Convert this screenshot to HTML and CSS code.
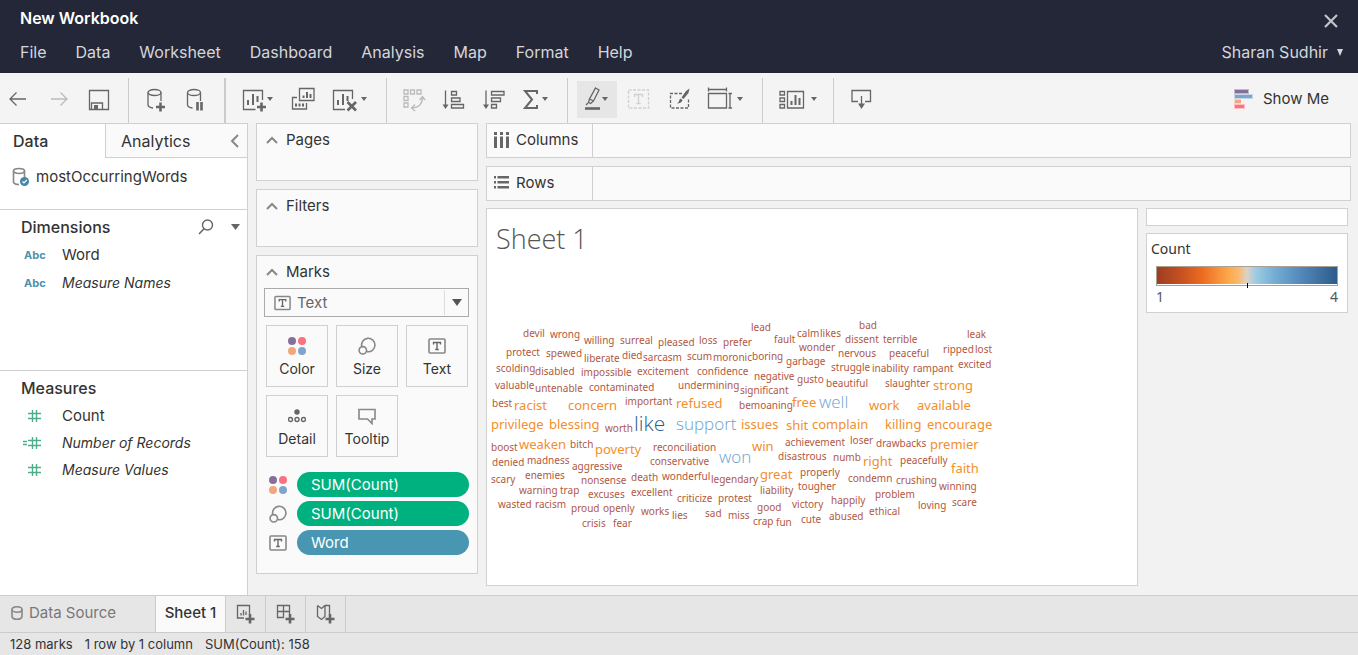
FILE: index.html
```html
<!DOCTYPE html>
<html lang="en">
<head>
<meta charset="utf-8">
<title>New Workbook</title>
<link rel="stylesheet" href="styles.css">
</head>
<body>
<svg class="defs" aria-hidden="true">
  <symbol id="i-text" viewBox="0 0 18 18"><rect x="1" y="2" width="16" height="14" rx="1" class="ln"/><path class="ln2" d="M5.500 7.500V5.500H12.500V7.500M9 5.500V12.500M7.200 12.500H10.800"/></symbol>
  <symbol id="i-color" viewBox="0 0 18 18"><circle cx="4" cy="4" r="4" fill="#86709b"/><circle cx="14" cy="4" r="4" fill="#fa7180"/><circle cx="4" cy="14" r="4" fill="#f3a67c"/><circle cx="14" cy="14" r="4" fill="#80a5cd"/></symbol>
  <symbol id="i-size" viewBox="0 0 18 18"><path class="ln" d="M3.800 9.800A6.700 6.700 0 1 1 9 14.600"/><circle cx="4.800" cy="13.300" r="3.700" class="ln"/></symbol>
  <symbol id="i-up" viewBox="0 0 12 8"><path d="M1 7 6 2 11 7" fill="none" stroke="#888" stroke-width="2"/></symbol>
  <symbol id="i-hash" viewBox="0 0 20 14"><path d="M9.500 1V13M13.500 1V13M5 4.500H18M5 9.500H18" fill="none" stroke="#4fae8a" stroke-width="1.400"/></symbol>
</svg>

<header class="top">
  <div class="top-row">
    <h1 class="book">New Workbook</h1>
    <button class="close" aria-label="Close"><svg width="14" height="14" viewBox="0 0 14 14"><path d="M1 1 13 13M13 1 1 13" stroke="#c4c5ca" stroke-width="2.200"/></svg></button>
  </div>
  <div class="top-row">
    <nav class="menu">
      <a href="#file">File</a><a href="#data">Data</a><a href="#worksheet">Worksheet</a><a href="#dashboard">Dashboard</a><a href="#analysis">Analysis</a><a href="#map">Map</a><a href="#format">Format</a><a href="#help">Help</a>
    </nav>
    <button class="user">Sharan Sudhir <svg width="6" height="7" viewBox="0 0 6 7"><path d="M0 0H6L3 7Z" fill="#d5d6da"/></svg></button>
  </div>
</header>

<div class="toolbar">
  <div class="group g1">
    <button class="tool" aria-label="Undo"><svg viewBox="0 0 32 32"><path class="t" d="M14.500 9.500 8 16 14.500 22.500M8 16H24"/></svg></button>
    <button class="tool" aria-label="Redo" disabled><svg viewBox="0 0 32 32"><path class="t off" d="M18.500 9.500 25 16 18.500 22.500M25 16H9"/></svg></button>
    <button class="tool" aria-label="Save"><svg viewBox="0 0 32 32"><path class="t" d="M7.500 7.500H26.500V26.500H7.500ZM9.500 26.500V20H20.500V26.500"/><path class="f" d="M12 22H16V26H12Z"/></svg></button>
  </div>
  <div class="group g2">
    <button class="tool" aria-label="New data source"><svg viewBox="0 0 32 32"><ellipse class="t" cx="14.500" cy="9.500" rx="6.500" ry="3"/><path class="t" d="M8 9.500V22Q8.500 24.500 13 25M21 9.500V18"/><path class="t b" d="M20.500 19.500V28.500M16 24H25"/></svg></button>
    <button class="tool" aria-label="Pause updates"><svg viewBox="0 0 32 32"><ellipse class="t" cx="14" cy="9.500" rx="6.500" ry="3"/><path class="t" d="M7.500 9.500V22Q8 24.500 12.500 25M20.500 9.500V18"/><path class="t b" d="M17.500 19V27.500M21.500 19V27.500"/></svg></button>
  </div>
  <div class="group g3">
    <button class="tool wide" aria-label="New worksheet"><svg viewBox="0 0 40 32"><path class="t" d="M22.500 17V7.500H3.500V26.500H15.500"/><path class="t m" d="M8 17V22M13 11V22M17.500 13V19"/><path class="t b" d="M21.500 19.500V28.500M17 24H26"/><path class="f" d="M27 14H33L30 18Z"/></svg></button>
    <button class="tool" aria-label="Duplicate"><svg viewBox="0 0 32 32"><path class="t" d="M11.500 5.500H26V17.500H11.500ZM9 14.500H4.500V26H18.500V20"/><path class="t m" d="M15.500 12.500V15M19 9V15M22.500 11V15M8 20.500V23.500M11.500 20.500V23.500M15 20.500V23.500"/></svg></button>
    <button class="tool wide" aria-label="Clear sheet"><svg viewBox="0 0 40 32"><path class="t" d="M24.500 16V7.500H5.500V26.500H17"/><path class="t m" d="M10 17V22M15 11V22M19.500 13V18"/><path class="t b" d="M19.500 19 28 27.500M28 19 19.500 27.500"/><path class="f" d="M33 14H39L36 18Z"/></svg></button>
  </div>
  <div class="group g4">
    <button class="tool" aria-label="Swap rows and columns" disabled><svg viewBox="0 0 32 32"><path class="t off" d="M6 7H10V11H6ZM12.500 7H16.500V11H12.500ZM19 7H23V11H19ZM6 13.500H10V17.500H6ZM6 20H10V24H6ZM24.500 14Q24.500 24.500 14 25M21.500 17 24.500 13.500 27 17M17 21.500 13.500 25 17 28"/></svg></button>
    <button class="tool" aria-label="Sort ascending"><svg viewBox="0 0 32 32"><path class="t" d="M7.500 7.500V23M13.500 8.500H18.500V12H13.500ZM13.500 15H22V18.500H13.500ZM13.500 21.500H25.500V25H13.500Z"/><path class="f" d="M4.500 21.500H10.500L7.500 26Z"/></svg></button>
    <button class="tool" aria-label="Sort descending"><svg viewBox="0 0 32 32"><path class="t" d="M8 7.500V23M13.500 8.500H26V12H13.500ZM13.500 15H22.500V18.500H13.500ZM13.500 21.500H18.500V25H13.500Z"/><path class="f" d="M5 21.500H11L8 26Z"/></svg></button>
    <button class="tool wide" aria-label="Totals"><svg viewBox="0 0 40 32"><path class="t m" d="M19 11V8H7L14 16.500 7 25H19V22"/><path class="f" d="M24 14H30L27 18Z"/></svg></button>
  </div>
  <div class="group g5">
    <button class="tool wide active" aria-label="Highlight"><svg viewBox="0 0 40 32"><path class="t" d="M18.500 5 22 7 16.500 18 12.500 16ZM12.500 16 11.500 19.500 13.500 20.500 16.500 18M9 22 11 20"/><path class="t b" d="M8 25.500H23"/><path class="f" d="M25 14H31L28 18Z"/></svg></button>
    <button class="tool" aria-label="Show mark labels" disabled><svg viewBox="0 0 32 32"><path class="t faint" stroke-dasharray="3 1.500" d="M3.500 7H23.500V25H3.500Z"/><path class="t faint" d="M9.500 14V11.500H17.500V14M13.500 11.500V20.500M11.500 20.500H15.500"/></svg></button>
    <button class="tool" aria-label="Format"><svg viewBox="0 0 32 32"><path class="t" stroke-dasharray="3 1.500" d="M17 10.500H5.500V25H23.500V15"/><path class="f" d="M24.500 5.500 23.500 10 18.500 16 16.500 14.500 21 8ZM16 15.500 17.500 17.500Q16 20.500 12 20.500 14.500 18.500 14.500 16.500Z"/></svg></button>
    <button class="tool wide" aria-label="Fit"><svg viewBox="0 0 40 32"><path class="t" d="M3.500 10.500H21.500V25H3.500ZM3.500 6.500H21.500M3.500 4.500V8.500M21.500 4.500V8.500M25 10.500V25M23.500 10.500H27M23.500 25H27"/><path class="f" d="M32 14H38L35 18Z"/></svg></button>
  </div>
  <div class="group g6">
    <button class="tool wide" aria-label="Show or hide cards"><svg viewBox="0 0 40 32"><path class="t" d="M1 8.500H5.500V12H1ZM1 15H5.500V18.500H1ZM1 21.500H5.500V25H1ZM8.500 8.500H24.500V25H8.500Z"/><path class="t m" d="M12.500 18V22M16.500 12V22M20.500 15V22"/><path class="f" d="M32 14H38L35 18Z"/></svg></button>
  </div>
  <div class="group g7">
    <button class="tool" aria-label="Presentation mode"><svg viewBox="0 0 32 32"><path class="t" d="M13 18.500H7V7.500H25.500V18.500H20M16.500 13V22"/><path class="f" d="M13 20.500H20L16.500 26Z"/></svg></button>
  </div>
  <button class="showme"><svg width="19" height="20" viewBox="0 0 19 20"><path d="M0 0H15V5H0Z" fill="#c4b9cd"/><path d="M1 1H14V4H1Z" fill="#86709b"/><path d="M0 5H19V10H0Z" fill="#c5d7e8"/><path d="M1 6H18V9H1Z" fill="#80a5cd"/><path d="M0 10H7V15H0Z" fill="#fbd7c1"/><path d="M1 11H7V14H1Z" fill="#f3a67c"/><path d="M0 15H11V20H0Z" fill="#fcc0c6"/><path d="M1 16H10V19H1Z" fill="#fa7180"/></svg>Show Me</button>
</div>

<main class="work">
  <aside class="pane">
    <div class="pane-tabs">
      <button class="ptab on">Data</button>
      <button class="ptab">Analytics<svg width="9" height="14" viewBox="0 0 9 14"><path d="M8 1 2 7 8 13" fill="none" stroke="#888" stroke-width="2"/></svg></button>
    </div>
    <div class="source"><svg width="18" height="20" viewBox="0 0 18 20"><ellipse cx="7" cy="4" rx="5.500" ry="2.500" class="ln"/><path class="ln" d="M1.500 4V15Q2 17.500 7 17.500M12.500 4V10"/><circle cx="12.500" cy="14.500" r="4.500" fill="#4287a8"/><path d="M10.500 14.500 12 16 14.800 13" fill="none" stroke="#fff" stroke-width="1.200"/></svg>mostOccurringWords</div>
    <section class="fields dims">
      <div class="fields-head"><h2>Dimensions</h2>
        <button class="plain" aria-label="Search"><svg width="16" height="16" viewBox="0 0 16 16"><circle cx="9.500" cy="6" r="5" fill="none" stroke="#666" stroke-width="1.400"/><path d="M6 9.800 1 15" stroke="#666" stroke-width="1.600"/></svg></button>
        <button class="plain" aria-label="Menu"><svg width="9" height="6" viewBox="0 0 9 6"><path d="M0 0H9L4.500 6Z" fill="#666"/></svg></button>
      </div>
      <ul>
        <li><span class="abc">Abc</span>Word</li>
        <li class="it"><span class="abc">Abc</span>Measure Names</li>
      </ul>
    </section>
    <section class="fields meas">
      <div class="fields-head"><h2>Measures</h2></div>
      <ul>
        <li><svg class="hash"><use href="#i-hash"/></svg>Count</li>
        <li class="it"><svg class="hash" viewBox="0 0 20 14"><use href="#i-hash" width="20" height="14"/><path d="M0 5.500H4M0 8.500H4" stroke="#4fae8a" stroke-width="1.300"/></svg>Number of Records</li>
        <li class="it"><svg class="hash"><use href="#i-hash"/></svg>Measure Values</li>
      </ul>
    </section>
  </aside>

  <div class="cards">
    <section class="card"><h2><svg class="up"><use href="#i-up"/></svg>Pages</h2></section>
    <section class="card"><h2><svg class="up"><use href="#i-up"/></svg>Filters</h2></section>
    <section class="card marks">
      <h2><svg class="up"><use href="#i-up"/></svg>Marks</h2>
      <div class="picker">
        <svg class="ic"><use href="#i-text"/></svg>
        <select aria-label="Mark type"><option>Text</option></select>
        <span class="picker-arrow"><svg width="10" height="7" viewBox="0 0 10 7"><path d="M0 0H10L5 7Z" fill="#555"/></svg></span>
      </div>
      <div class="props">
        <button><svg class="ic"><use href="#i-color"/></svg>Color</button>
        <button><svg class="ic"><use href="#i-size"/></svg>Size</button>
        <button><svg class="ic"><use href="#i-text"/></svg>Text</button>
        <button><svg class="ic" viewBox="0 0 18 18"><circle cx="9" cy="5" r="2.700" fill="#666"/><g class="ln2"><circle cx="2.500" cy="12.500" r="2"/><circle cx="9" cy="12.500" r="2"/><circle cx="15.500" cy="12.500" r="2"/></g></svg>Detail</button>
        <button><svg class="ic" viewBox="0 0 18 18"><path class="ln" d="M1 2.500H17V12H14V16.500L9.500 12H1Z"/></svg>Tooltip</button>
      </div>
      <div class="pills">
        <div><svg class="ic"><use href="#i-color"/></svg><button class="pill">SUM(Count)</button></div>
        <div><svg class="ic"><use href="#i-size"/></svg><button class="pill">SUM(Count)</button></div>
        <div><svg class="ic"><use href="#i-text"/></svg><button class="pill blue">Word</button></div>
      </div>
    </section>
  </div>

  <div class="stage">
    <div class="shelf"><h2><svg width="15" height="16" viewBox="0 0 15 16"><path d="M0 0H3V3H0ZM0 4.500H3V16H0ZM6 0H9V3H6ZM6 4.500H9V16H6ZM12 0H15V3H12ZM12 4.500H15V16H12Z" fill="#666"/></svg>Columns</h2></div>
    <div class="shelf"><h2><svg width="15" height="13" viewBox="0 0 15 13"><path d="M0 0H2V2.500H0ZM3.500 0H15V2.500H3.500ZM0 5H2V7.500H0ZM3.500 5H15V7.500H3.500ZM0 10H2V12.500H0ZM3.500 10H15V12.500H3.500Z" fill="#666"/></svg>Rows</h2></div>
    <div class="view">
      <section class="sheet">
        <h2>Sheet 1</h2>
        <svg class="cloud" viewBox="487 315 520 220" role="img" aria-label="Word cloud of the most occurring words">
          <g class="n1">
            <text x="523" y="337">devil</text><text x="550" y="338">wrong</text><text x="584" y="344">willing</text><text x="620" y="344">surreal</text><text x="658" y="346">pleased</text><text x="699" y="344">loss</text><text x="723" y="346">prefer</text><text x="751" y="331">lead</text><text x="774" y="343">fault</text><text x="797" y="337">calm</text><text x="820" y="337">likes</text><text x="859" y="329">bad</text><text x="845" y="343">dissent</text><text x="883" y="343">terrible</text><text x="967" y="338">leak</text>
            <text x="506" y="356">protect</text><text x="546" y="357">spewed</text><text x="584" y="362">liberate</text><text x="622" y="359">died</text><text x="643" y="361">sarcasm</text><text x="687" y="360">scum</text><text x="713" y="361">moronic</text><text x="752" y="360">boring</text><text x="799" y="351">wonder</text><text x="786" y="365">garbage</text><text x="838" y="357">nervous</text><text x="889" y="357">peaceful</text><text x="943" y="353">ripped</text><text x="975" y="353">lost</text>
            <text x="496" y="372">scolding</text><text x="535" y="375">disabled</text><text x="581" y="376">impossible</text><text x="637" y="375">excitement</text><text x="697" y="375">confidence</text><text x="754" y="380">negative</text><text x="797" y="383">gusto</text><text x="831" y="371">struggle</text><text x="872" y="372">inability</text><text x="913" y="372">rampant</text><text x="958" y="368">excited</text>
            <text x="495" y="389">valuable</text><text x="535" y="392">untenable</text><text x="589" y="391">contaminated</text><text x="678" y="389">undermining</text><text x="740" y="394">significant</text><text x="826" y="387">beautiful</text><text x="885" y="387">slaughter</text>
            <text x="492" y="407">best</text><text x="625" y="405">important</text><text x="739" y="409">bemoaning</text><text x="605" y="432">worth</text>
            <text x="491" y="451">boost</text><text x="570" y="448">bitch</text><text x="653" y="451">reconciliation</text><text x="785" y="446">achievement</text><text x="850" y="444">loser</text><text x="876" y="447">drawbacks</text>
            <text x="492" y="466">denied</text><text x="527" y="464">madness</text><text x="572" y="470">aggressive</text><text x="650" y="465">conservative</text><text x="778" y="460">disastrous</text><text x="833" y="461">numb</text><text x="900" y="464">peacefully</text>
            <text x="491" y="483">scary</text><text x="525" y="479">enemies</text><text x="581" y="484">nonsense</text><text x="631" y="481">death</text><text x="662" y="480">wonderful</text><text x="711" y="483">legendary</text><text x="800" y="476">properly</text><text x="848" y="482">condemn</text><text x="896" y="484">crushing</text><text x="939" y="490">winning</text>
            <text x="519" y="494">warning</text><text x="560" y="494">trap</text><text x="588" y="498">excuses</text><text x="631" y="496">excellent</text><text x="677" y="502">criticize</text><text x="718" y="502">protest</text><text x="760" y="494">liability</text><text x="798" y="490">tougher</text><text x="831" y="504">happily</text><text x="875" y="498">problem</text>
            <text x="498" y="508">wasted</text><text x="535" y="508">racism</text><text x="571" y="512">proud</text><text x="603" y="512">openly</text><text x="641" y="515">works</text><text x="672" y="519">lies</text><text x="705" y="517">sad</text><text x="728" y="519">miss</text><text x="757" y="511">good</text><text x="792" y="508">victory</text><text x="753" y="525">crap</text><text x="776" y="526">fun</text><text x="801" y="523">cute</text><text x="829" y="520">abused</text><text x="869" y="515">ethical</text><text x="918" y="509">loving</text><text x="952" y="506">scare</text>
            <text x="582" y="527">crisis</text><text x="613" y="527">fear</text>
          </g>
          <g class="n2">
            <text x="933" y="390">strong</text><text x="514" y="410">racist</text><text x="568" y="410">concern</text><text x="676" y="408">refused</text><text x="792" y="407">free</text><text x="869" y="410">work</text><text x="917" y="410">available</text>
            <text x="491" y="429">privilege</text><text x="549" y="429">blessing</text><text x="741" y="429">issues</text><text x="786" y="430">shit</text><text x="812" y="429">complain</text><text x="885" y="429">killing</text><text x="927" y="429">encourage</text>
            <text x="519" y="449">weaken</text><text x="595" y="454">poverty</text><text x="752" y="451">win</text><text x="930" y="449">premier</text><text x="863" y="466">right</text><text x="951" y="473">faith</text><text x="760" y="479">great</text>
          </g>
          <g class="n3"><text x="819" y="408">well</text><text x="676" y="430">support</text><text x="719" y="463">won</text></g>
          <g class="n4"><text x="634" y="431">like</text></g>
        </svg>
      </section>
      <aside class="side">
        <div class="blank"></div>
        <section class="legend">
          <h3>Count</h3>
          <div class="ramp"><i class="tick"></i></div>
          <div class="ends"><span>1</span><span>4</span></div>
        </section>
      </aside>
    </div>
  </div>
</main>

<footer>
  <div class="tabs">
    <button class="tab src"><svg width="12" height="14" viewBox="0 0 12 14"><ellipse cx="6" cy="3.500" rx="5" ry="2.700" class="ln"/><path class="ln" d="M1 3.500V10.500Q1.500 13.200 6 13.200T11 10.500V3.500"/></svg>Data Source</button>
    <button class="tab cur">Sheet 1</button>
    <button class="tab add" aria-label="New worksheet"><svg width="20" height="20" viewBox="0 0 20 20"><path class="t" d="M13.500 10V1.500H1.500V14H8"/><path class="t" d="M5 9V11.500M7.500 6V11.500M10 7.500V11"/><path class="t b" d="M14 10V19.500M9.500 15H18.500"/></svg></button>
    <button class="tab add" aria-label="New dashboard"><svg width="20" height="20" viewBox="0 0 20 20"><path class="t" d="M13.500 10V1.500H1.500V13.500H8M1.500 7.500H13.500M7.500 1.500V13.500"/><path class="t b" d="M14 10V19.500M9.500 15H18.500"/></svg></button>
    <button class="tab add" aria-label="New story"><svg width="20" height="20" viewBox="0 0 20 20"><path class="t" d="M1.500 1.500 5.500 4.500 9 1.500H13.500V10M1.500 1.500V12.500L5.500 15.500 9 12.500V1.500"/><path class="t b" d="M14 10V19.500M9.500 15H18.500"/></svg></button>
  </div>
  <div class="status"><span>128 marks</span><span>1 row by 1 column</span><span>SUM(Count): 158</span></div>
</footer>
</body>
</html>
```
FILE: styles.css
```css
* { box-sizing: border-box; }
body {
  margin: 0;
  min-height: 100vh;
  display: flex;
  flex-direction: column;
  background: #f2f2f2;
  color: #333;
  font-family: Inter, "Liberation Sans", sans-serif;
  font-size: 15px;
  line-height: 20px;
}
h1, h2, h3, ul { margin: 0; padding: 0; font-weight: 400; font-size: inherit; }
ul { list-style: none; }
button, select { font: inherit; color: inherit; background: none; border: 0; border-radius: 0; padding: 0; margin: 0; }
svg { display: block; flex: none; }
.defs { position: absolute; width: 0; height: 0; }
.ln, .ln2 { fill: none; stroke: #888; stroke-width: 1.600; }
.ln2 { stroke: #666; stroke-width: 1.400; }

.top { background: #232738; color: #d5d6da; height: 73px; padding: 8px 15px 11px 20px; display: flex; flex-direction: column; justify-content: space-between; }
.top-row { display: flex; justify-content: space-between; align-items: center; }
.book { color: #fff; font-weight: 600; font-size: 16px; }
.close { padding: 5px 5px 0 0; }
.menu { display: flex; gap: 29px; font-size: 16px; }
.menu a { color: inherit; text-decoration: none; }
.user { display: flex; align-items: center; gap: 9px; font-size: 16px; }

.toolbar { display: flex; align-items: center; height: 50px; padding-right: 29px; background: #f4f4f4; flex: none; }
.group { display: flex; align-items: center; gap: 8px; height: 45px; border-right: 1px solid #ccc; align-self: flex-end; }
.toolbar .group { padding-bottom: 3px; }
.g1 { padding: 0 14px 0 2px; }
.g2 { padding: 0 12px 0 11px; border-right-width: 2px; }
.g3 { padding: 0 18px 0 14px; }
.g4 { padding: 0 9px 0 11px; }
.g5 { padding: 0 17px 0 9px; }
.g6 { padding: 0 14px 0 16px; }
.g7 { padding: 0 11px; border: 0; }
.tool { width: 32px; height: 37px; display: flex; align-items: center; }
.tool svg { width: 100%; height: 32px; }
.wide { width: 40px; }
.active { background: #e6e6e6; }
.t { fill: none; stroke: #666; stroke-width: 1.300; }
.t.m { stroke-width: 2; }
.t.b { stroke-width: 2.600; }
.t.off { stroke: #bbb; }
.t.faint { stroke: #d0d0d0; }
.f { fill: #666; }
.showme { margin-left: auto; display: flex; align-items: center; gap: 10px; padding-top: 2px; }

.work { flex: 1; display: flex; align-items: stretch; padding-right: 7px; }
.pane { width: 248px; background: #fff; border-right: 1px solid #d0d0d0; border-top: 1px solid #d0d0d0; flex: none; display: flex; flex-direction: column; }
.pane-tabs { display: flex; height: 34px; }
.ptab { padding: 0 13px; font-weight: 500; flex: none; width: 105px; text-align: left; font-size: 16px; }
.ptab + .ptab { width: auto; flex: 1; display: flex; align-items: center; justify-content: space-between; padding: 0 8px 0 15px; background: #fafafa; border: 1px solid #d0d0d0; border-width: 0 0 1px 1px; font-weight: 400; }
.source { height: 52px; padding: 9px 12px; display: flex; gap: 6px; border-bottom: 1px solid #d0d0d0; }
.fields-head { display: flex; align-items: center; gap: 17px; padding: 6px 7px 3px 21px; height: 31px; }
.fields-head h2 { flex: 1; font-weight: 500; font-size: 16px; }
.dims { height: 161px; border-bottom: 1px solid #d0d0d0; }
.fields li { display: flex; align-items: center; height: 28px; padding-left: 23px; }
.meas li { height: 27px; }
.fields .it { font-style: italic; font-size: 14px; }
.abc { width: 39px; font-size: 11px; font-weight: 700; font-style: normal; color: #4f90ab; padding-left: 1px; }
.hash { width: 20px; height: 14px; margin-right: 19px; }

.cards { width: 222px; margin: 0 8px; flex: none; display: flex; flex-direction: column; gap: 8px; }
.card { height: 58px; border: 1px solid #d0d0d0; background: #fafafa; }
.card h2 { display: flex; align-items: center; gap: 8px; padding: 6px 9px; }
.marks { height: auto; padding: 0 8px 18px 7px; }
.marks h2 { padding: 6px 2px; }
.up { width: 12px; height: 8px; }
.ic { width: 18px; height: 18px; }
.picker { display: grid; grid-template-columns: 32px 1fr 24px; align-items: center; height: 29px; border: 1px solid #aaa; }
.picker > * { grid-row: 1; }
.picker .ic { grid-column: 1; margin-left: 9px; width: 17px; }
.picker select { grid-column: 1 / 4; appearance: none; height: 27px; padding-left: 32px; color: #666; }
.picker-arrow { grid-column: 3; height: 25px; border-left: 1px solid #ddd; display: flex; align-items: center; justify-content: center; pointer-events: none; }
.props { display: grid; grid-template-columns: repeat(3, 62px); gap: 8px; padding: 8px 2px 15px; }
.props button { height: 62px; border: 1px solid #d0d0d0; display: flex; flex-direction: column; align-items: center; gap: 4px; padding-top: 11px; font-size: 14px; }
.pills { display: flex; flex-direction: column; gap: 4px; }
.pills div { display: flex; align-items: center; gap: 10px; padding-left: 5px; }
.pill { flex: 1; height: 25px; border-radius: 13px; background: #00b180; color: #fff; text-align: left; padding-left: 14px; }
.blue { background: #4996b2; }

.stage { flex: 1; min-width: 0; display: flex; flex-direction: column; gap: 8px; }
.shelf { height: 35px; border: 1px solid #d0d0d0; background: #fafafa; display: flex; }
.shelf h2 { width: 106px; border-right: 1px solid #d0d0d0; display: flex; align-items: center; gap: 7px; padding: 0 0 2px 7px; }
.view { flex: 1; display: flex; gap: 8px; padding: 0 3px 9px 0; margin-top: -1px; }
.sheet { flex: 1; min-width: 0; background: #fff; border: 1px solid #d0d0d0; }
.sheet h2 { font: 300 27px/36px "Open Sans", "Noto Sans", sans-serif; color: #555; padding: 12px 9px 0; }
.cloud { width: 520px; height: 220px; margin-top: 58px; font-family: "Noto Sans", sans-serif; }
.n1 { font-size: 10px; fill: #b2583f; }
.n2 { font-size: 13px; fill: #f28e2b; }
.n3 { font-size: 17px; fill: #6ba3cd; font-family: "Open Sans", sans-serif; font-weight: 300; }
.n4 { font-size: 21px; fill: #2b5c8a; font-family: "Open Sans", sans-serif; font-weight: 300; }
.side { width: 202px; flex: none; display: flex; flex-direction: column; gap: 7px; font-family: "Noto Sans", sans-serif; font-size: 14px; }
.blank { height: 18px; border: 1px solid #d0d0d0; background: #fff; }
.legend { height: 80px; border: 1px solid #d0d0d0; background: #fff; padding: 5px 9px; }
.legend h3 { margin-left: -5px; }
.ramp { position: relative; height: 20px; margin-top: 7px; border: 1px solid #aaa193; box-shadow: inset 0 -1px #fff; background: linear-gradient(90deg, #9e3d22, #c8521f 14%, #ec6b21 25%, #fca547 39%, #fbb86a 45%, #dbd3c6 50%, #9ccbe3 55%, #75aed5 65%, #5388bb 80%, #2b5c8a); }
.tick { position: absolute; left: 50%; bottom: -3px; width: 1px; height: 5px; background: #000; }
.ends { display: flex; justify-content: space-between; margin-top: 1px; color: #555; }

footer { background: #e6e6e6; flex: none; }
.tabs { display: flex; height: 38px; border: 1px solid #ccc; border-width: 1px 0; }
.tab { border-right: 1px solid #ccc; width: 40px; display: flex; align-items: center; justify-content: center; padding-bottom: 2px; }
.add { padding-bottom: 0; }
.src { width: 156px; color: #777; justify-content: flex-start; gap: 6px; padding-left: 11px; }
.cur { width: 70px; background: #fafafa; font-weight: 500; }
.status { display: flex; gap: 12px; padding: 1px 10px; font-size: 13px; height: 22px; align-items: center; }
```
